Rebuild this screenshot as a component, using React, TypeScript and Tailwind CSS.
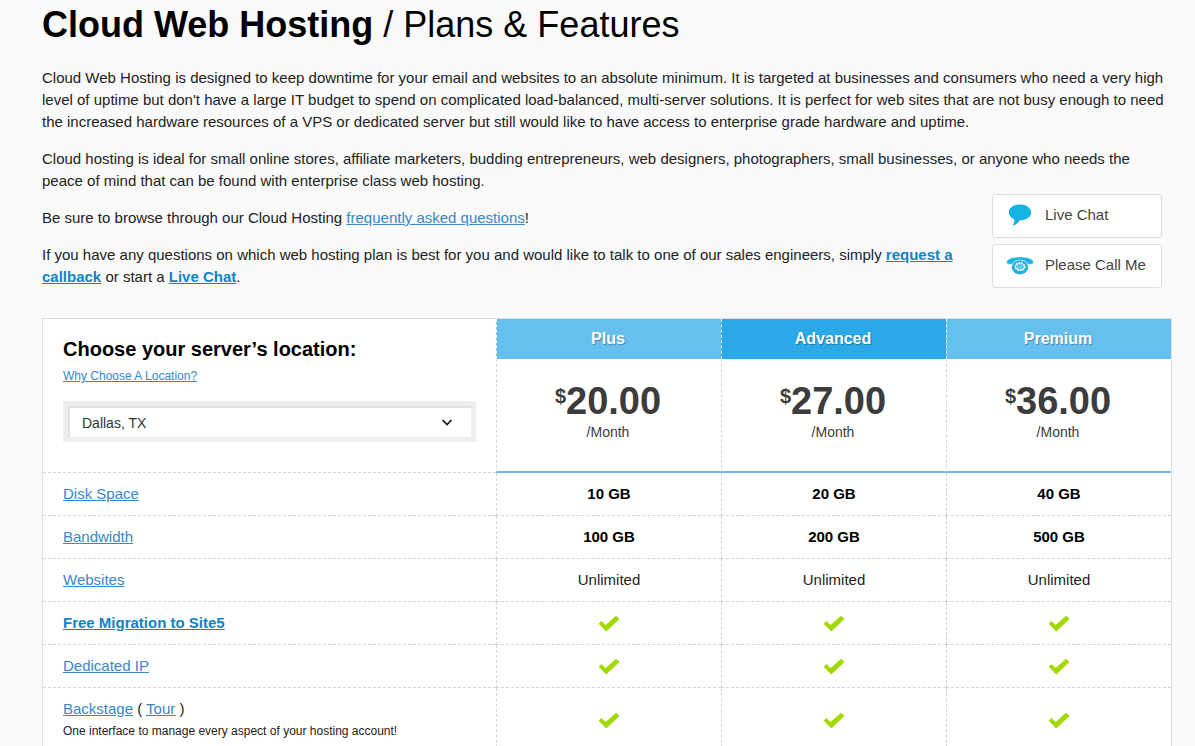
import React from 'react';

interface Plan {
  name: string;
  price: string;
  featured?: boolean;
}

interface Feature {
  key: string;
  label: React.ReactNode;
  values: string[] | 'check';
  bold?: boolean;
}

const plans: Plan[] = [
  { name: 'Plus', price: '20.00' },
  { name: 'Advanced', price: '27.00', featured: true },
  { name: 'Premium', price: '36.00' },
];

const Link = ({ children, bold }: { children: React.ReactNode; bold?: boolean }) => (
  <a href="#" className={bold ? 'font-bold text-[#1183c6] underline' : 'text-[#3787c9] underline'}>
    {children}
  </a>
);

const features: Feature[] = [
  { key: 'disk', label: <Link>Disk Space</Link>, values: ['10 GB', '20 GB', '40 GB'], bold: true },
  { key: 'bandwidth', label: <Link>Bandwidth</Link>, values: ['100 GB', '200 GB', '500 GB'], bold: true },
  { key: 'websites', label: <Link>Websites</Link>, values: ['Unlimited', 'Unlimited', 'Unlimited'] },
  { key: 'migration', label: <Link bold>Free Migration to Site5</Link>, values: 'check' },
  { key: 'ip', label: <Link>Dedicated IP</Link>, values: 'check' },
  {
    key: 'backstage',
    label: (
      <>
        <Link>Backstage</Link> ( <Link>Tour</Link> )
        <span className="block text-xs leading-[22px]">One interface to manage every aspect of your hosting account!</span>
      </>
    ),
    values: 'check',
  },
];

const CheckIcon = () => (
  <svg className="mx-auto block" width="22" height="17" viewBox="0 0 22 17" role="img" aria-label="Included">
    <path d="M0.7 8.7 3.3 6 7.7 9.9 18 0.7 21.5 4 8.3 16.6Z" fill="#a3d900" />
  </svg>
);

const ChatIcon = () => (
  <svg width="28" height="24" viewBox="0 0 28 24" aria-hidden="true">
    <path
      d="M14 1.5C7.8 1.5 2.8 5 2.8 9.4c0 3 2.200 5.600 5.500 7 .4 2-.3 4.200-1.800 6.200 3.500-.9 5.900-2.800 7.300-5.300 6.500 0 11.400-3.500 11.400-7.900S20.200 1.500 14 1.500Z"
      fill="#16b3e3"
    />
  </svg>
);

const PhoneIcon = () => (
  <svg width="28" height="24" viewBox="0 0 28 24" aria-hidden="true">
    <ellipse cx="14" cy="14.200" rx="8.300" ry="7.200" fill="#26b1e2" />
    <path
      d="M14 4C7 4 1.800 5.500.7 8.700c-.5 1.500.6 2.500 2.400 2.500h1.800c1.500 0 2.100-.8 2.500-1.700C8.600 7.900 11 7.200 14 7.200s5.400.7 6.600 2.300c.4.900 1 1.700 2.500 1.700h1.800c1.800 0 2.900-1 2.400-2.500C26.200 5.500 21 4 14 4Z"
      fill="#16b3e3"
      stroke="#fff"
      strokeWidth="0.500"
    />
    <ellipse cx="14" cy="13.700" rx="4.700" ry="3.600" fill="#5fc8ec" stroke="#fff" strokeWidth="1.600" strokeDasharray="1.800 0.700" />
  </svg>
);

const contactOptions = [
  { label: 'Live Chat', icon: <ChatIcon /> },
  { label: 'Please Call Me', icon: <PhoneIcon /> },
];

export default function App() {
  return (
    <main className="min-h-screen bg-[#fafafa] pr-[23px] pl-[42px] font-['Liberation_Sans',Arial,sans-serif] text-[15px] leading-[22px] text-[#222]">
      <h1 className="pt-[5px] text-4xl text-black">
        <strong>Cloud Web Hosting</strong> / Plans &amp; Features
      </h1>

      <p className="mt-[22px]">
        Cloud Web Hosting is designed to keep downtime for your email and websites to an absolute minimum. It is targeted
        at businesses and consumers who need a very high level of uptime but don't have a large IT budget to spend on
        complicated load-balanced, multi-server solutions. It is perfect for web sites that are not busy enough to need
        the increased hardware resources of a VPS or dedicated server but still would like to have access to enterprise
        grade hardware and uptime.
      </p>
      <p className="mt-[15px]">
        Cloud hosting is ideal for small online stores, affiliate marketers, budding entrepreneurs, web designers,
        photographers, small businesses, or anyone who needs the peace of mind that can be found with enterprise class
        web hosting.
      </p>

      <div className="flex items-start gap-[30px] pt-0.5 pr-2.5">
        <div className="flex-1 pt-[13px]">
          <p>
            Be sure to browse through our Cloud Hosting <Link>frequently asked questions</Link>!
          </p>
          <p className="mt-[15px]">
            If you have any questions on which web hosting plan is best for you and would like to talk to one of our
            sales engineers, simply <Link bold>request a callback</Link> or start a <Link bold>Live Chat</Link>.
          </p>
        </div>
        <div className="flex w-[170px] flex-col gap-1.5">
          {contactOptions.map(({ label, icon }) => (
            <button
              key={label}
              type="button"
              className="flex h-11 items-center gap-[11px] rounded-[3px] border border-[#dfdfdf] bg-white pb-0.5 pl-[13px] text-[#444]"
            >
              {icon}
              {label}
            </button>
          ))}
        </div>
      </div>

      <table className="mt-[30px] w-full table-fixed border-separate border-spacing-0 border border-[#dfdfdf] bg-white">
        <colgroup>
          <col />
          <col className="w-[225px]" />
          <col className="w-[225px]" />
          <col className="w-[225px]" />
        </colgroup>
        <thead>
          <tr>
            <td rowSpan={2} className="border-b border-dashed border-[#d5d5d5] px-5 pt-[19px] align-top">
              <h2 className="text-xl leading-[22px] font-bold text-black">
                <label htmlFor="location">Choose your server’s location:</label>
              </h2>
              <div className="mt-[5px] text-xs leading-[22px]">
                <Link>Why Choose A Location?</Link>
              </div>
              <div className="relative mt-3.5 border-[5px] border-[#eee]">
                <select
                  id="location"
                  className="block h-[31px] w-full appearance-none border-t-2 border-l-2 border-[#e2e2e2] bg-white pl-3 text-sm text-[#333]"
                >
                  <option>Dallas, TX</option>
                </select>
                <svg
                  className="pointer-events-none absolute top-[13px] right-[18px]"
                  width="12"
                  height="8"
                  viewBox="0 0 12 8"
                  aria-hidden="true"
                >
                  <path d="M1.500 1 6 5.500 10.500 1" fill="none" stroke="#111" strokeWidth="1.600" />
                </svg>
              </div>
            </td>
            {plans.map(({ name, featured }) => (
              <th
                key={name}
                scope="col"
                className={`h-10 border-l border-dashed border-white pr-0.5 text-base text-white [text-shadow:1px_1px_1px_rgba(0,0,0,0.3)] ${
                  featured ? 'bg-[#2ba8e8]' : 'bg-[#66c0ee]'
                }`}
              >
                {name}
              </th>
            ))}
          </tr>
          <tr>
            {plans.map(({ name, price }) => (
              <td
                key={name}
                className="h-[114px] border-l border-dashed border-[#d5d5d5] pt-5 pr-0.5 text-center align-top text-[#3c3c3c] [border-bottom:2px_solid_#73b9de]"
              >
                <div className="flex items-start justify-center font-bold">
                  <span className="pt-1.5 text-xl leading-[22px]">$</span>
                  <span className="text-[38px] leading-[44px]">{price}</span>
                </div>
                <div className="text-sm leading-[18px]">/Month</div>
              </td>
            ))}
          </tr>
        </thead>
        <tbody>
          {features.map(({ key, label, values, bold }) => (
            <tr key={key}>
              <th scope="row" className="border-b border-dashed border-[#d5d5d5] px-5 py-2.5 text-left font-normal">
                {label}
              </th>
              {plans.map(({ name }, i) => (
                <td
                  key={name}
                  className={`border-b border-l border-dashed border-[#d5d5d5] text-center ${
                    bold ? 'font-bold text-black' : ''
                  }`}
                >
                  {values === 'check' ? <CheckIcon /> : values[i]}
                </td>
              ))}
            </tr>
          ))}
        </tbody>
      </table>
    </main>
  );
}
